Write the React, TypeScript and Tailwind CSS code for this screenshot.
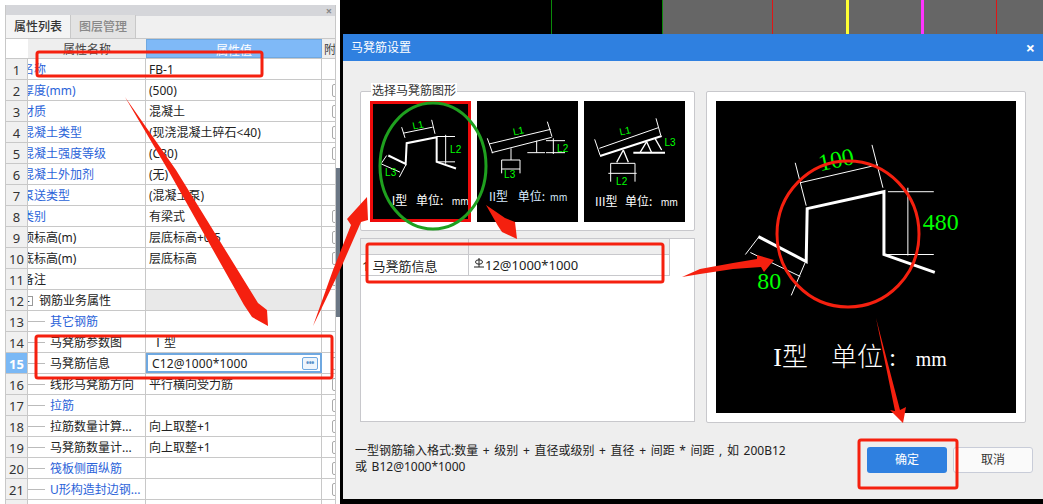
const FONT = '"Noto Sans", "Noto Sans CJK SC", sans-serif';

type Row = { n: number; name: string; val?: string; blue?: boolean; clip?: boolean; tree?: boolean; check?: boolean; group?: boolean; sel?: boolean };

const rows: Row[] = [
  { n: 1, name: "名称", val: "FB-1", blue: true, clip: true },
  { n: 2, name: "厚度(mm)", val: "(500)", blue: true, clip: true, check: true },
  { n: 3, name: "材质", val: "混凝土", blue: true, clip: true, check: true },
  { n: 4, name: "混凝土类型", val: "(现浇混凝土碎石<40)", blue: true, clip: true, check: true },
  { n: 5, name: "混凝土强度等级", val: "(C30)", blue: true, clip: true, check: true },
  { n: 6, name: "混凝土外加剂", val: "(无)", blue: true, clip: true },
  { n: 7, name: "泵送类型", val: "(混凝土泵)", blue: true, clip: true },
  { n: 8, name: "类别", val: "有梁式", blue: true, clip: true, check: true },
  { n: 9, name: "顶标高(m)", val: "层底标高+0.5", clip: true, check: true },
  { n: 10, name: "底标高(m)", val: "层底标高", clip: true, check: true },
  { n: 11, name: "备注", clip: true, check: true },
  { n: 12, name: "钢筋业务属性", group: true },
  { n: 13, name: "其它钢筋", blue: true, tree: true },
  { n: 14, name: "马凳筋参数图", val: " Ⅰ型", tree: true },
  { n: 15, name: "马凳筋信息", val: "C12@1000*1000", tree: true, check: true, sel: true },
  { n: 16, name: "线形马凳筋方向", val: "平行横向受力筋", tree: true, check: true },
  { n: 17, name: "拉筋", blue: true, tree: true, check: true },
  { n: 18, name: "拉筋数量计算...", val: "向上取整+1", tree: true, check: true },
  { n: 19, name: "马凳筋数量计...", val: "向上取整+1", tree: true, check: true },
  { n: 20, name: "筏板侧面纵筋", blue: true, tree: true, check: true },
  { n: 21, name: "U形构造封边钢...", blue: true, tree: true, check: true },
  { n: 22, name: "", tree: false },
];

function PropRow({ r }: { r: Row }) {
  return (
    <div className="flex h-[21px] shrink-0 border-b border-[#c8c8c8] text-[12px] leading-[22px] text-[#222]">
      <div
        className={
          r.sel
            ? "w-[22px] shrink-0 border-r border-[#c8c8c8] bg-[#7ab8f5] text-center text-[13px] font-bold text-white"
            : "w-[22px] shrink-0 border-r border-[#c8c8c8] bg-[#f0f0f0] text-center text-[13px] text-[#333]"
        }
      >
        {r.n}
      </div>
      <div className="flex w-[118px] shrink-0 items-center overflow-hidden whitespace-nowrap border-r border-[#c8c8c8] pt-[1px]">
        {r.clip && <span className={r.blue ? "-ml-[6px] text-[#2b63d9]" : "-ml-[6px]"}>{r.name}</span>}
        {r.group && (
          <>
            <span className="-ml-[5px] mr-[5px] h-[10px] w-[10px] shrink-0 border border-[#999] text-center text-[10px] leading-[7px]">-</span>
            <span className="ml-[1px]">{r.name}</span>
          </>
        )}
        {r.tree && (
          <>
            <span className="h-px w-[17px] shrink-0 bg-[#bbb]" />
            <span className={r.blue ? "ml-[5px] text-[#2b63d9]" : "ml-[5px]"}>{r.name}</span>
          </>
        )}
      </div>
      <div
        className={
          r.group
            ? "w-[176px] shrink-0 border-r border-[#c8c8c8] bg-[#e9e9e9]"
            : r.sel
              ? "flex w-[176px] shrink-0 items-center justify-between border-2 border-[#6fa8e0] pl-[4px] pr-[2px]"
              : "w-[176px] shrink-0 overflow-hidden whitespace-pre border-r border-[#c8c8c8] pl-[3px]"
        }
      >
        {r.sel ? (
          <>
            <span className="pt-[1px] text-[12px] tracking-[0.15px]">{r.val}</span>
            <span className="flex h-[13px] w-[16px] items-center justify-center rounded-[2px] border border-[#6fa8e0] bg-[#eef5fc] text-[8px] font-bold leading-none tracking-tighter text-[#5a8fc8]">•••</span>
          </>
        ) : (
          r.val
        )}
      </div>
      <div className="flex flex-1 items-center justify-end overflow-hidden">
        {r.check && <span className="-mr-[8px] h-[13px] w-[11px] shrink-0 rounded-[2px] border border-[#aaa] bg-white" />}
      </div>
    </div>
  );
}

const LABEL_FONT = "Noto Sans CJK SC, sans-serif";

function Thumb1() {
  return (
    <svg viewBox="99 312 285 342" className="h-full w-full bg-black">
      <g stroke="#fff" strokeWidth="3" fill="none">
        <path d="M190 398L278 380M185 380L195 412M275 358L285 400M290 408H345M290 484H345M317 403V490M123 490L180 515M140 465L123 490M198 492L178 530" />
        <path d="M145 465L197 490L200 428L290 410V484L348 504" strokeWidth="6" />
      </g>
      <g fill="#0f0" fontSize="30" fontFamily="Liberation Sans, sans-serif">
        <text x="234" y="384" textAnchor="middle" transform="rotate(-12 234 373)">L1</text>
        <text x="347" y="457" textAnchor="middle">L2</text>
        <text x="152" y="526" textAnchor="middle">L3</text>
      </g>
      <text y="614" fill="#fff" fontSize="36" fontFamily={LABEL_FONT}>
        <tspan x="155">I型</tspan>
        <tspan x="228">单位:</tspan>
        <tspan x="335" fontSize="28">mm</tspan>
      </text>
    </svg>
  );
}

function Thumb2() {
  return (
    <svg viewBox="411 303 303 363" className="h-full w-full bg-black">
      <path
        d="M447 432L632 388M455 458L635 412M442 415L458 460M622 365L636 410M513 445V480M485 480H540M485 507H540M485 480V520M540 480V520M590 422V458M562 458H615M618 422H675M618 458H675M640 415V462"
        stroke="#fff"
        strokeWidth="3"
        fill="none"
      />
      <g fill="#0f0" fontSize="30" fontFamily="Liberation Sans, sans-serif">
        <text x="535" y="403" textAnchor="middle" transform="rotate(-12 535 392)">L1</text>
        <text x="668" y="455" textAnchor="middle">L2</text>
        <text x="509" y="535" textAnchor="middle">L3</text>
      </g>
      <text y="604" fill="#d8ecff" fontSize="36" fontFamily={LABEL_FONT}>
        <tspan x="447">II型</tspan>
        <tspan x="533">单位:</tspan>
        <tspan x="630" fontSize="28">mm</tspan>
      </text>
    </svg>
  );
}

function Thumb3() {
  return (
    <svg viewBox="732 303 303 363" className="h-full w-full bg-black">
      <g stroke="#fff" strokeWidth="3" fill="none">
        <path d="M778 445L955 383M764 418L780 465M948 355L962 405M812 490H885M812 490V520M885 490V520M805 520H890M812 520V545M885 520V545" />
        <path d="M780 468L965 408M880 458H975" strokeWidth="6" />
        <path d="M850 450L830 487M850 450L865 487M920 425L900 458M920 425L935 458M945 415L965 450" strokeWidth="4" />
      </g>
      <g fill="#0f0" fontSize="30" fontFamily="Liberation Sans, sans-serif">
        <text x="855" y="403" textAnchor="middle" transform="rotate(-12 855 392)">L1</text>
        <text x="845" y="555" textAnchor="middle">L2</text>
        <text x="990" y="438" textAnchor="middle">L3</text>
      </g>
      <text y="617" fill="#fff" fontSize="36" fontFamily={LABEL_FONT}>
        <tspan x="765">III型</tspan>
        <tspan x="855">单位:</tspan>
        <tspan x="962" fontSize="28">mm</tspan>
      </text>
    </svg>
  );
}

function BigPreview() {
  return (
    <svg viewBox="716 101 300 313" className="h-full w-full bg-black">
      <g stroke="#fff" strokeWidth="1" fill="none">
        <path d="M800 183L878 165M795 163L806 206M872 145L883 188M888 192H934M885 255H934M908 188V256M750 253L800 277M758 238L745 255M805 263L791 296" />
        <path d="M758 237L806 262L807 209L884 192V255L935 273" strokeWidth="3" />
      </g>
      <g fill="#0f0" fontSize="24" fontFamily="Liberation Serif, serif">
        <text x="836" y="168" textAnchor="middle" transform="rotate(-12 836 160)">100</text>
        <text x="941" y="230" textAnchor="middle">480</text>
        <text x="769" y="290" textAnchor="middle">80</text>
      </g>
      <text y="367" fill="#fff" fontSize="26" fontWeight="300" fontFamily="Liberation Serif, Noto Sans CJK SC, serif">
        <tspan x="773">I型</tspan>
        <tspan x="831">单位</tspan>
        <tspan x="889">:</tspan>
        <tspan x="916" fontSize="20">mm</tspan>
      </text>
    </svg>
  );
}

function Annotations() {
  const red = "#f5200f";
  return (
    <svg viewBox="0 0 1043 504" className="pointer-events-none absolute left-0 top-0 h-[504px] w-[1043px]">
      <ellipse cx="433" cy="166" rx="53" ry="63" fill="none" stroke="#1fa01f" strokeWidth="3" />
      <ellipse cx="848" cy="234" rx="71" ry="73" fill="none" stroke={red} strokeWidth="3" />
      <g fill="none" stroke={red} strokeWidth="3">
        <rect x="37" y="52" width="225" height="24" rx="2" />
        <rect x="36" y="336" width="296" height="42" rx="2" />
        <rect x="367" y="244" width="296" height="38" rx="2" />
        <rect x="859" y="440" width="98" height="48" rx="2" />
      </g>
      <g fill={red}>
        <polygon points="125,97 176,170 258,303 267,310 268,326 252,317 244,305 168,170" />
        <polygon points="313,326 333,270 351,225 347,219 367,197 368,220 361,222 340,270" />
        <polygon points="486,205 505,218 515,222 517,239 502,232 498,226" />
        <polygon points="682,277 700,269 733,263 757,259 757,255 774,260 764,272 761,267 733,269 700,274" />
        <polygon points="876,318 900,410 906,407 903,423 890,410 895,411" />
      </g>
    </svg>
  );
}

export default function App() {
  return (
    <div className="relative flex h-[504px] w-[1043px] overflow-hidden bg-black" style={{ fontFamily: FONT }}>
      {/* Left property panel */}
      <div className="flex h-full w-[340px] shrink-0 bg-white pl-[5px] pt-[5px]">
        <div className="flex w-[331px] shrink-0 flex-col overflow-hidden border-l border-r border-[#c8c8c8]">
          <div className="flex h-[11px] shrink-0 items-center justify-end bg-[#d5d6da] pr-[3px] text-[11px] font-bold leading-none text-[#888]">×</div>
          <div className="flex h-[23px] shrink-0 items-end border-b border-[#c8c8c8] bg-[#f0f0f0]">
            <div className="flex h-[23px] w-[65px] items-center justify-center border-r border-[#c8c8c8] bg-[#f4f4f4] text-[12px] font-medium text-[#333]">属性列表</div>
            <div className="flex h-[23px] w-[65px] items-center justify-center border-r border-[#c8c8c8] bg-[#e3e3e3] text-[12px] font-medium text-[#888]">图层管理</div>
          </div>
          <div className="flex h-[20px] shrink-0 border-b border-[#c8c8c8] text-[12px] leading-[22px]">
            <div className="w-[22px] shrink-0 bg-white" />
            <div className="w-[118px] shrink-0 bg-[#eeeeee] text-center text-[#444]">属性名称</div>
            <div className="w-[176px] shrink-0 border border-[#6fa8e0] bg-[#7fb9f7] text-center text-white">属性值</div>
            <div className="flex-1 overflow-hidden whitespace-nowrap bg-[#eeeeee] pl-[2px] text-[#444]">附加</div>
          </div>
          {rows.map((r) => (
            <PropRow key={r.n} r={r} />
          ))}
        </div>
        <div className="flex w-[4px] shrink-0 flex-col pt-[163px]">
          <div className="h-[149px] bg-[#6b7785]" />
        </div>
      </div>

      {/* Right side */}
      <div className="ml-[3px] flex w-[700px] shrink-0 flex-col">
        <div className="flex h-[34px] shrink-0">
          <div className="flex w-[319px] shrink-0 justify-end pr-[110px]">
            <div className="h-full w-px bg-[#0a8a0a]" />
          </div>
          <div className="flex flex-1 border-l border-[#0a8a0a] bg-[#666666] pl-[109px]">
            <div className="h-full w-px bg-[#e01515]" />
            <div className="ml-[73px] h-full w-[3px] bg-[#ffff33]" />
            <div className="ml-[72px] h-full w-[3px] bg-[#ff33ff]" />
            <div className="ml-[72px] h-full w-px bg-[#e01515]" />
          </div>
        </div>

        {/* Dialog */}
        <div className="flex h-[465px] shrink-0 flex-col bg-[#eeeeee]">
          <div className="flex h-[27px] shrink-0 items-center justify-between bg-[#2f80e0] pl-[8px] pr-[8px] text-[12px] text-white">
            <span>马凳筋设置</span>
            <span className="text-[16px] font-bold leading-none">×</span>
          </div>
          <div className="flex flex-1 pl-[17px] pt-[30px]">
            <div className="flex w-[335px] shrink-0 flex-col">
              <div className="relative h-[140px] shrink-0 rounded-[2px] border border-[#c8c8cc] bg-white">
                <span className="absolute -top-[9px] left-[10px] bg-white px-[1px] text-[12px] leading-[16px] text-[#333]">选择马凳筋图形</span>
                <div className="flex gap-[6px] pl-[9px] pt-[9px]">
                  <div className="h-[121px] w-[101px] border-[3px] border-[#ee0a0a]">
                    <Thumb1 />
                  </div>
                  <div className="h-[121px] w-[101px]">
                    <Thumb2 />
                  </div>
                  <div className="h-[121px] w-[101px]">
                    <Thumb3 />
                  </div>
                </div>
              </div>
              <div className="mt-[7px] h-[184px] shrink-0 border border-[#c8c8cc] bg-white pr-[24px] text-[13px] text-[#222]">
                <div className="flex h-[16px] border-b border-[#c8c8cc] bg-[#eeeeee]">
                  <div className="w-[108px] border-r border-[#c8c8cc]" />
                  <div className="flex-1 border-r border-[#c8c8cc]" />
                </div>
                <div className="flex h-[21px] border-b border-[#c8c8cc] leading-[21px]">
                  <div className="flex w-[108px] gap-[3px] overflow-hidden whitespace-nowrap border-r border-[#c8c8cc] pl-[1px] pt-[1px]">
                    <span>1</span>
                    <span>马凳筋信息</span>
                  </div>
                  <div className="flex flex-1 items-center border-r border-[#c8c8cc] pl-[5px]">
                    <svg viewBox="0 0 10 10" className="mb-[5px] h-[10px] w-[10px] shrink-0" fill="none" stroke="#222" strokeWidth="1">
                      <ellipse cx="5" cy="4" rx="3.5" ry="2.2" />
                      <path d="M5 0V9M0 9H10" />
                    </svg>
                    <span className="ml-[1px]">12@1000*1000</span>
                  </div>
                </div>
              </div>
              <div className="ml-[-5px] mt-[21px] w-[440px] text-[12px] leading-[16px] text-[#222] [word-spacing:1.5px]">
                一型钢筋输入格式:数量 + 级别 + 直径或级别 + 直径 + 间距 * 间距 , 如 200B12
                <br />
                或 B12@1000*1000
              </div>
            </div>

            <div className="ml-[11px] flex w-[320px] shrink-0 flex-col">
              <div className="h-[332px] shrink-0 rounded-[2px] border border-[#c8c8cc] bg-white p-[9px]">
                <BigPreview />
              </div>
              <div className="mt-[24px] flex gap-[6px] pl-[161px]">
                <button className="h-[26px] w-[80px] shrink-0 rounded-[3px] bg-[#2f80e0] text-[12px] text-white">确定</button>
                <button className="h-[26px] w-[80px] shrink-0 rounded-[3px] border border-[#c8ccd8] bg-[#fafafa] text-[12px] text-[#333]">取消</button>
              </div>
            </div>
          </div>
        </div>

        <div className="h-[5px] shrink-0" />
      </div>

      <Annotations />
    </div>
  );
}
